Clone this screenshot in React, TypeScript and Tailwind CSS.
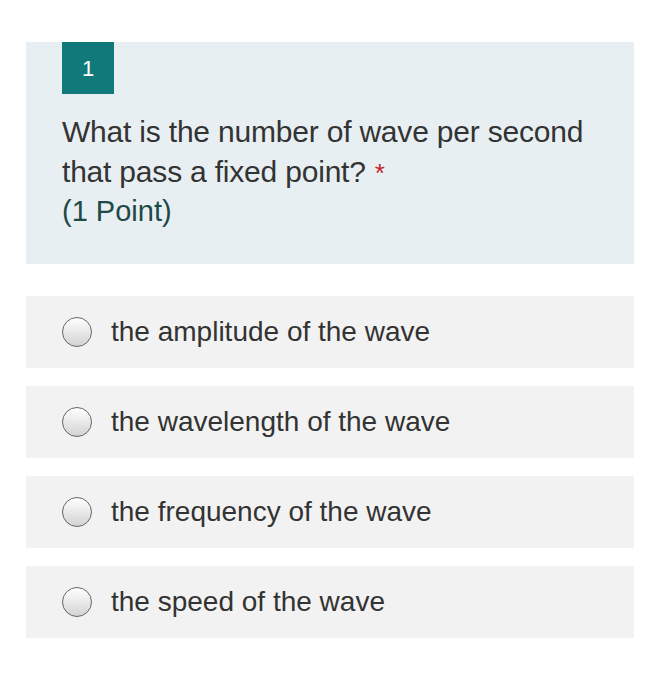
const options = [
  "the amplitude of the wave",
  "the wavelength of the wave",
  "the frequency of the wave",
  "the speed of the wave",
];

export default function App() {
  return (
    <div
      className="w-[660px] h-[700px] bg-white pt-[42px] px-[26px] text-[#333333]"
      style={{ fontFamily: '"Liberation Sans", Arial, sans-serif' }}
    >
      <div className="bg-[#e8eff2] px-[36px] pb-[34px]">
        <div className="w-[52px] h-[52px] bg-[#107a7b] text-white text-[22px] flex items-center justify-center">
          1
        </div>
        <div className="mt-[18px] text-[30px] leading-[40px] tracking-[-0.2px]">
          What is the number of wave per second that pass a fixed point?
          <span className="ml-[9px] text-[#c4262e] text-[26px] leading-none">*</span>
        </div>
        <div className="text-[29px] leading-[38px] text-[#1d4a47]">(1 Point)</div>
      </div>

      <div className="mt-[32px] flex flex-col gap-[18px]">
        {options.map((o) => (
          <div key={o} className="h-[72px] bg-[#f2f2f2] flex items-center pl-[36px]">
            <div className="w-[30px] h-[30px] rounded-full border-[1.5px] border-[#666666] bg-gradient-to-b from-white to-[#d3d3d3]" />
            <span className="ml-[19px] text-[28px]">{o}</span>
          </div>
        ))}
      </div>
    </div>
  );
}
